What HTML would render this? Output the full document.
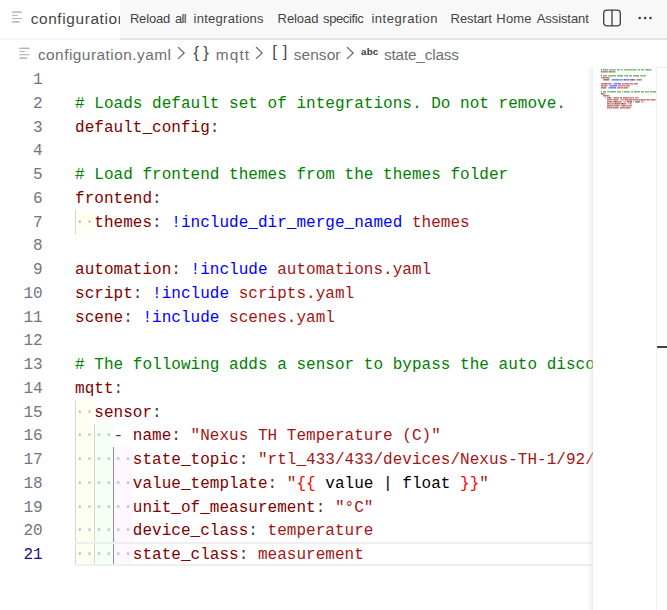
<!DOCTYPE html>
<html lang="en">
<head>
<meta charset="utf-8">
<title>configuration.yaml</title>
<style>
html,body{margin:0;padding:0;}
body{width:667px;height:610px;overflow:hidden;background:#fff;position:relative;font-family:"Liberation Sans",sans-serif;color:#3b3b3b;}
.abs{position:absolute;}
#tabbar{left:0;top:0;width:667px;height:37.9px;background:#f8f8f8;border-bottom:2px solid #e3e3e3;box-sizing:content-box;}
#tab{left:0;top:0;width:120px;height:37.9px;background:#fff;overflow:hidden;border-bottom:2px solid #f6f6f6;}
#tab .lbl{left:30.7px;top:9.4px;font-size:15.4px;line-height:20px;white-space:nowrap;color:#464646;letter-spacing:0.618px;}
.actw{left:0;top:0;}
.act{top:9.7px;font-size:13px;line-height:18px;white-space:nowrap;color:#444444;}
#crumbs{left:0;top:39.7px;width:667px;height:27.5px;background:#fff;}
.cr{top:5.6px;font-size:15.4px;line-height:20px;white-space:pre;color:#707070;}
.sym{font-size:16.6px;top:3.1px;letter-spacing:-0.2px;color:#4a4a4a;}
.abc{font-size:9.8px;font-weight:bold;top:2.8px;letter-spacing:0.2px;color:#3b3b3b;}
#editor{left:0;top:67.25px;width:593px;height:543px;overflow:hidden;font-family:"Liberation Mono",monospace;font-size:16px;}
.ln{left:0;width:42.6px;margin-top:1.85px;text-align:right;height:23.75px;line-height:23.75px;color:#6e7681;white-space:pre;}
.ln.cur{color:#171184;}
.l{left:75px;margin-top:1.85px;letter-spacing:0.024px;height:23.75px;line-height:23.75px;white-space:pre;color:#3b3b3b;}
.c{color:#008000}.k{color:#800000}.s{color:#a31515}.t{color:#0000ff}.b{color:#ff0000}.p{color:#000}
.w{color:#b4b4b4;font-size:19px;line-height:1px;letter-spacing:-1.776px;position:relative;left:-0.9px;opacity:0.72}
.g{width:1px;background:#d6d6d6;}
.ga{width:1px;background:#8c8c8c;}
.iy{background:rgba(255,255,64,0.07);}
.ig{background:rgba(127,255,127,0.07);}
.ip{background:rgba(255,127,255,0.07);}
#curline{left:75px;width:520px;height:24px;margin-top:-0.25px;box-sizing:border-box;border-top:2px solid #eeeeee;border-bottom:2px solid #eeeeee;}
#mmshadow{left:584.5px;top:67.25px;width:8.5px;height:543px;box-shadow:#dcdcdc -8.5px 0 8.5px -8.5px inset;}
#minimap{left:593px;top:67px;width:64px;height:543px;background:#fff;overflow:hidden;}
#ruler{left:656px;top:67.25px;width:11px;height:543px;border-left:1px solid #f1f1f1;border-top:1px solid #f1f1f1;box-sizing:border-box;background:#fff;}
#rmark{left:0;top:277.75px;width:11px;height:2px;background:#424242;}
</style>
</head>
<body>
<div id="tabbar" class="abs"></div>
<div id="tab" class="abs">
  <svg class="abs" style="left:11px;top:10px" width="14" height="14" viewBox="0 0 14 14"><g fill="#b4b4b4"><rect x="0.9" y="1.4" width="10.1" height="1.5"/><rect x="0.9" y="4.8" width="5.9" height="1"/><rect x="0.9" y="8" width="10.1" height="1"/><rect x="0.9" y="11.2" width="7.8" height="1.5"/></g></svg>
  <div class="abs lbl">configuration</div>
</div>
<div class="abs actw"><span class="abs act" style="left:129.9px;letter-spacing:-0.16px">Reload</span> <span class="abs act" style="left:174.9px;letter-spacing:-0.6px">all</span> <span class="abs act" style="left:193.6px;letter-spacing:0.255px">integrations</span></div>
<div class="abs actw"><span class="abs act" style="left:277.6px;letter-spacing:-0.08px">Reload</span> <span class="abs act" style="left:323.0px;letter-spacing:-0.371px">specific</span> <span class="abs act" style="left:371.4px;letter-spacing:0.54px">integration</span></div>
<div class="abs actw"><span class="abs act" style="left:450.6px;letter-spacing:-0.1px">Restart</span> <span class="abs act" style="left:496.3px;letter-spacing:0.2px">Home</span> <span class="abs act" style="left:536.7px;letter-spacing:-0.075px">Assistant</span></div>
<svg class="abs" style="left:602.4px;top:6.8px" width="22" height="22" viewBox="0 0 22 22"><rect x="1.7" y="3.1" width="16.6" height="15.8" rx="3.2" fill="none" stroke="#3b3b3b" stroke-width="1.3"/><line x1="10" y1="3.1" x2="10" y2="18.9" stroke="#3b3b3b" stroke-width="1.3"/></svg>
<svg class="abs" style="left:636px;top:14px" width="18" height="8" viewBox="0 0 18 8"><g fill="#3b3b3b"><circle cx="3.7" cy="4" r="1.25"/><circle cx="9.1" cy="4" r="1.25"/><circle cx="14.5" cy="4" r="1.25"/></g></svg>

<div id="crumbs" class="abs">
  <svg class="abs" style="left:18px;top:6px" width="14" height="14" viewBox="0 0 14 14"><g fill="#b4b4b4"><rect x="1.3" y="1.6" width="10.3" height="1.5"/><rect x="1.3" y="5" width="5.9" height="1"/><rect x="1.3" y="8.2" width="10.3" height="1.1"/><rect x="1.3" y="11.4" width="7.8" height="1.5"/></g></svg>
  <div class="abs cr" style="left:37.9px;letter-spacing:0.482px">configuration.yaml</div>
  <svg class="abs chev" style="left:175.7px;top:7.6px" width="11" height="14" viewBox="0 0 11 14"><path d="M2.0 0.1 L8.2 6.0 L2.0 11.9" fill="none" stroke="#646464" stroke-width="1.2"/></svg>
  <div class="abs cr sym" style="left:193.6px">{ }</div>
  <div class="abs cr" style="left:215.8px;letter-spacing:1.133px">mqtt</div>
  <svg class="abs chev" style="left:253.7px;top:7.6px" width="11" height="14" viewBox="0 0 11 14"><path d="M2.0 0.1 L8.2 6.0 L2.0 11.9" fill="none" stroke="#646464" stroke-width="1.2"/></svg>
  <div class="abs cr sym" style="left:272.3px;word-spacing:1.6px;margin-top:-0.7px">[ ]</div>
  <div class="abs cr" style="left:293.8px;letter-spacing:0.08px">sensor</div>
  <svg class="abs chev" style="left:344.7px;top:7.6px" width="11" height="14" viewBox="0 0 11 14"><path d="M2.0 0.1 L8.2 6.0 L2.0 11.9" fill="none" stroke="#646464" stroke-width="1.2"/></svg>
  <div class="abs cr abc" style="left:361px">abc</div>
  <div class="abs cr" style="left:384px;letter-spacing:-0.2px">state_class</div>
</div>

<div id="editor" class="abs">
<div class="abs iy" style="left:75px;top:142.5px;width:19px;height:23.75px"></div>
<div class="abs iy" style="left:75px;top:332.5px;width:19px;height:166.25px"></div>
<div class="abs ig" style="left:94px;top:356.25px;width:19px;height:142.5px"></div>
<div class="abs ip" style="left:113px;top:380px;width:20px;height:118.75px"></div>
<div class="abs g" style="left:75px;top:142.5px;height:23.75px"></div>
<div class="abs g" style="left:75px;top:332.5px;height:166.25px"></div>
<div class="abs g" style="left:94px;top:356.25px;height:142.5px"></div>
<div class="abs ga" style="left:113px;top:380px;height:118.75px"></div>
<div id="curline" class="abs" style="top:475px"></div>
<div class="abs ln" style="top:0px">1</div>
<div class="abs ln" style="top:23.75px">2</div>
<div class="abs ln" style="top:47.5px">3</div>
<div class="abs ln" style="top:71.25px">4</div>
<div class="abs ln" style="top:95px">5</div>
<div class="abs ln" style="top:118.75px">6</div>
<div class="abs ln" style="top:142.5px">7</div>
<div class="abs ln" style="top:166.25px">8</div>
<div class="abs ln" style="top:190px">9</div>
<div class="abs ln" style="top:213.75px">10</div>
<div class="abs ln" style="top:237.5px">11</div>
<div class="abs ln" style="top:261.25px">12</div>
<div class="abs ln" style="top:285px">13</div>
<div class="abs ln" style="top:308.75px">14</div>
<div class="abs ln" style="top:332.5px">15</div>
<div class="abs ln" style="top:356.25px">16</div>
<div class="abs ln" style="top:380px">17</div>
<div class="abs ln" style="top:403.75px">18</div>
<div class="abs ln" style="top:427.5px">19</div>
<div class="abs ln" style="top:451.25px">20</div>
<div class="abs ln cur" style="top:475px">21</div>
<div class="abs l" style="top:23.75px"><span class="c"># Loads default set of integrations. Do not remove.</span></div>
<div class="abs l" style="top:47.5px"><span class="k">default_config</span>:</div>
<div class="abs l" style="top:95px"><span class="c"># Load frontend themes from the themes folder</span></div>
<div class="abs l" style="top:118.75px"><span class="k">frontend</span>:</div>
<div class="abs l" style="top:142.5px"><span class="w">··</span><span class="k">themes</span>: <span class="t">!include_dir_merge_named</span> <span class="s">themes</span></div>
<div class="abs l" style="top:190px"><span class="k">automation</span>: <span class="t">!include</span> <span class="s">automations.yaml</span></div>
<div class="abs l" style="top:213.75px"><span class="k">script</span>: <span class="t">!include</span> <span class="s">scripts.yaml</span></div>
<div class="abs l" style="top:237.5px"><span class="k">scene</span>: <span class="t">!include</span> <span class="s">scenes.yaml</span></div>
<div class="abs l" style="top:285px"><span class="c"># The following adds a sensor to bypass the auto disco</span></div>
<div class="abs l" style="top:308.75px"><span class="k">mqtt</span>:</div>
<div class="abs l" style="top:332.5px"><span class="w">··</span><span class="k">sensor</span>:</div>
<div class="abs l" style="top:356.25px"><span class="w">····</span>- <span class="k">name</span>: <span class="s">"Nexus TH Temperature (C)"</span></div>
<div class="abs l" style="top:380px"><span class="w">······</span><span class="k">state_topic</span>: <span class="s">"rtl_433/433/devices/Nexus-TH-1/92/</span></div>
<div class="abs l" style="top:403.75px"><span class="w">······</span><span class="k">value_template</span>: <span class="s">"</span><span class="b">{{</span><span class="p"> value | float </span><span class="b">}}</span><span class="s">"</span></div>
<div class="abs l" style="top:427.5px"><span class="w">······</span><span class="k">unit_of_measurement</span>: <span class="s">"°C"</span></div>
<div class="abs l" style="top:451.25px"><span class="w">······</span><span class="k">device_class</span>: <span class="s">temperature</span></div>
<div class="abs l" style="top:475px"><span class="w">······</span><span class="k">state_class</span>: <span class="s">measurement</span></div>
</div>
<div id="mmshadow" class="abs"></div>
<div id="minimap" class="abs">
<svg class="abs" style="left:0;top:0" width="64" height="48" viewBox="0 0 64 48" shape-rendering="crispEdges"><g fill="#008000"><rect x="8" y="2" width="1" height="1" opacity="0.66"/><rect x="8" y="3" width="1" height="1" opacity="0.39"/><rect x="10" y="2" width="1" height="1" opacity="0.59"/><rect x="10" y="3" width="1" height="1" opacity="0.35"/><rect x="11" y="2" width="1" height="1" opacity="0.51"/><rect x="11" y="3" width="1" height="1" opacity="0.30"/><rect x="12" y="2" width="1" height="1" opacity="0.51"/><rect x="12" y="3" width="1" height="1" opacity="0.30"/><rect x="13" y="2" width="1" height="1" opacity="0.51"/><rect x="13" y="3" width="1" height="1" opacity="0.30"/><rect x="14" y="2" width="1" height="1" opacity="0.51"/><rect x="14" y="3" width="1" height="1" opacity="0.30"/><rect x="16" y="2" width="1" height="1" opacity="0.51"/><rect x="16" y="3" width="1" height="1" opacity="0.30"/><rect x="17" y="2" width="1" height="1" opacity="0.51"/><rect x="17" y="3" width="1" height="1" opacity="0.30"/><rect x="18" y="2" width="1" height="1" opacity="0.41"/><rect x="18" y="3" width="1" height="1" opacity="0.24"/><rect x="19" y="2" width="1" height="1" opacity="0.51"/><rect x="19" y="3" width="1" height="1" opacity="0.30"/><rect x="20" y="2" width="1" height="1" opacity="0.51"/><rect x="20" y="3" width="1" height="1" opacity="0.30"/><rect x="21" y="2" width="1" height="1" opacity="0.41"/><rect x="21" y="3" width="1" height="1" opacity="0.24"/><rect x="22" y="2" width="1" height="1" opacity="0.41"/><rect x="22" y="3" width="1" height="1" opacity="0.24"/><rect x="24" y="2" width="1" height="1" opacity="0.51"/><rect x="24" y="3" width="1" height="1" opacity="0.30"/><rect x="25" y="2" width="1" height="1" opacity="0.51"/><rect x="25" y="3" width="1" height="1" opacity="0.30"/><rect x="26" y="2" width="1" height="1" opacity="0.41"/><rect x="26" y="3" width="1" height="1" opacity="0.24"/><rect x="28" y="2" width="1" height="1" opacity="0.51"/><rect x="28" y="3" width="1" height="1" opacity="0.30"/><rect x="29" y="2" width="1" height="1" opacity="0.41"/><rect x="29" y="3" width="1" height="1" opacity="0.24"/><rect x="31" y="2" width="1" height="1" opacity="0.41"/><rect x="31" y="3" width="1" height="1" opacity="0.24"/><rect x="32" y="2" width="1" height="1" opacity="0.51"/><rect x="32" y="3" width="1" height="1" opacity="0.30"/><rect x="33" y="2" width="1" height="1" opacity="0.41"/><rect x="33" y="3" width="1" height="1" opacity="0.24"/><rect x="34" y="2" width="1" height="1" opacity="0.51"/><rect x="34" y="3" width="1" height="1" opacity="0.30"/><rect x="35" y="2" width="1" height="1" opacity="0.51"/><rect x="35" y="3" width="1" height="1" opacity="0.30"/><rect x="36" y="2" width="1" height="1" opacity="0.41"/><rect x="36" y="3" width="1" height="1" opacity="0.24"/><rect x="37" y="2" width="1" height="1" opacity="0.51"/><rect x="37" y="3" width="1" height="1" opacity="0.30"/><rect x="38" y="2" width="1" height="1" opacity="0.41"/><rect x="38" y="3" width="1" height="1" opacity="0.24"/><rect x="39" y="2" width="1" height="1" opacity="0.41"/><rect x="39" y="3" width="1" height="1" opacity="0.24"/><rect x="40" y="2" width="1" height="1" opacity="0.51"/><rect x="40" y="3" width="1" height="1" opacity="0.30"/><rect x="41" y="2" width="1" height="1" opacity="0.51"/><rect x="41" y="3" width="1" height="1" opacity="0.30"/><rect x="42" y="2" width="1" height="1" opacity="0.51"/><rect x="42" y="3" width="1" height="1" opacity="0.30"/><rect x="43" y="2" width="1" height="1" opacity="0.26"/><rect x="43" y="3" width="1" height="1" opacity="0.15"/><rect x="45" y="2" width="1" height="1" opacity="0.59"/><rect x="45" y="3" width="1" height="1" opacity="0.35"/><rect x="46" y="2" width="1" height="1" opacity="0.51"/><rect x="46" y="3" width="1" height="1" opacity="0.30"/><rect x="48" y="2" width="1" height="1" opacity="0.51"/><rect x="48" y="3" width="1" height="1" opacity="0.30"/><rect x="49" y="2" width="1" height="1" opacity="0.51"/><rect x="49" y="3" width="1" height="1" opacity="0.30"/><rect x="50" y="2" width="1" height="1" opacity="0.41"/><rect x="50" y="3" width="1" height="1" opacity="0.24"/><rect x="52" y="2" width="1" height="1" opacity="0.41"/><rect x="52" y="3" width="1" height="1" opacity="0.24"/><rect x="53" y="2" width="1" height="1" opacity="0.51"/><rect x="53" y="3" width="1" height="1" opacity="0.30"/><rect x="54" y="2" width="1" height="1" opacity="0.66"/><rect x="54" y="3" width="1" height="1" opacity="0.39"/><rect x="55" y="2" width="1" height="1" opacity="0.51"/><rect x="55" y="3" width="1" height="1" opacity="0.30"/><rect x="56" y="2" width="1" height="1" opacity="0.51"/><rect x="56" y="3" width="1" height="1" opacity="0.30"/><rect x="57" y="2" width="1" height="1" opacity="0.51"/><rect x="57" y="3" width="1" height="1" opacity="0.30"/><rect x="58" y="2" width="1" height="1" opacity="0.26"/><rect x="58" y="3" width="1" height="1" opacity="0.15"/></g>
<g fill="#800000"><rect x="8" y="4" width="1" height="1" opacity="0.51"/><rect x="8" y="5" width="1" height="1" opacity="0.30"/><rect x="9" y="4" width="1" height="1" opacity="0.51"/><rect x="9" y="5" width="1" height="1" opacity="0.30"/><rect x="10" y="4" width="1" height="1" opacity="0.41"/><rect x="10" y="5" width="1" height="1" opacity="0.24"/><rect x="11" y="4" width="1" height="1" opacity="0.51"/><rect x="11" y="5" width="1" height="1" opacity="0.30"/><rect x="12" y="4" width="1" height="1" opacity="0.51"/><rect x="12" y="5" width="1" height="1" opacity="0.30"/><rect x="13" y="4" width="1" height="1" opacity="0.41"/><rect x="13" y="5" width="1" height="1" opacity="0.24"/><rect x="14" y="4" width="1" height="1" opacity="0.41"/><rect x="14" y="5" width="1" height="1" opacity="0.24"/><rect x="15" y="4" width="1" height="1" opacity="0.26"/><rect x="15" y="5" width="1" height="1" opacity="0.15"/><rect x="16" y="4" width="1" height="1" opacity="0.51"/><rect x="16" y="5" width="1" height="1" opacity="0.30"/><rect x="17" y="4" width="1" height="1" opacity="0.51"/><rect x="17" y="5" width="1" height="1" opacity="0.30"/><rect x="18" y="4" width="1" height="1" opacity="0.51"/><rect x="18" y="5" width="1" height="1" opacity="0.30"/><rect x="19" y="4" width="1" height="1" opacity="0.41"/><rect x="19" y="5" width="1" height="1" opacity="0.24"/><rect x="20" y="4" width="1" height="1" opacity="0.41"/><rect x="20" y="5" width="1" height="1" opacity="0.24"/><rect x="21" y="4" width="1" height="1" opacity="0.51"/><rect x="21" y="5" width="1" height="1" opacity="0.30"/></g><g fill="#3b3b3b"><rect x="22" y="4" width="1" height="1" opacity="0.26"/><rect x="22" y="5" width="1" height="1" opacity="0.15"/></g>
<g fill="#008000"><rect x="8" y="8" width="1" height="1" opacity="0.66"/><rect x="8" y="9" width="1" height="1" opacity="0.39"/><rect x="10" y="8" width="1" height="1" opacity="0.59"/><rect x="10" y="9" width="1" height="1" opacity="0.35"/><rect x="11" y="8" width="1" height="1" opacity="0.51"/><rect x="11" y="9" width="1" height="1" opacity="0.30"/><rect x="12" y="8" width="1" height="1" opacity="0.51"/><rect x="12" y="9" width="1" height="1" opacity="0.30"/><rect x="13" y="8" width="1" height="1" opacity="0.51"/><rect x="13" y="9" width="1" height="1" opacity="0.30"/><rect x="15" y="8" width="1" height="1" opacity="0.41"/><rect x="15" y="9" width="1" height="1" opacity="0.24"/><rect x="16" y="8" width="1" height="1" opacity="0.41"/><rect x="16" y="9" width="1" height="1" opacity="0.24"/><rect x="17" y="8" width="1" height="1" opacity="0.51"/><rect x="17" y="9" width="1" height="1" opacity="0.30"/><rect x="18" y="8" width="1" height="1" opacity="0.51"/><rect x="18" y="9" width="1" height="1" opacity="0.30"/><rect x="19" y="8" width="1" height="1" opacity="0.41"/><rect x="19" y="9" width="1" height="1" opacity="0.24"/><rect x="20" y="8" width="1" height="1" opacity="0.51"/><rect x="20" y="9" width="1" height="1" opacity="0.30"/><rect x="21" y="8" width="1" height="1" opacity="0.51"/><rect x="21" y="9" width="1" height="1" opacity="0.30"/><rect x="22" y="8" width="1" height="1" opacity="0.51"/><rect x="22" y="9" width="1" height="1" opacity="0.30"/><rect x="24" y="8" width="1" height="1" opacity="0.41"/><rect x="24" y="9" width="1" height="1" opacity="0.24"/><rect x="25" y="8" width="1" height="1" opacity="0.51"/><rect x="25" y="9" width="1" height="1" opacity="0.30"/><rect x="26" y="8" width="1" height="1" opacity="0.51"/><rect x="26" y="9" width="1" height="1" opacity="0.30"/><rect x="27" y="8" width="1" height="1" opacity="0.66"/><rect x="27" y="9" width="1" height="1" opacity="0.39"/><rect x="28" y="8" width="1" height="1" opacity="0.51"/><rect x="28" y="9" width="1" height="1" opacity="0.30"/><rect x="29" y="8" width="1" height="1" opacity="0.51"/><rect x="29" y="9" width="1" height="1" opacity="0.30"/><rect x="31" y="8" width="1" height="1" opacity="0.41"/><rect x="31" y="9" width="1" height="1" opacity="0.24"/><rect x="32" y="8" width="1" height="1" opacity="0.41"/><rect x="32" y="9" width="1" height="1" opacity="0.24"/><rect x="33" y="8" width="1" height="1" opacity="0.51"/><rect x="33" y="9" width="1" height="1" opacity="0.30"/><rect x="34" y="8" width="1" height="1" opacity="0.66"/><rect x="34" y="9" width="1" height="1" opacity="0.39"/><rect x="36" y="8" width="1" height="1" opacity="0.41"/><rect x="36" y="9" width="1" height="1" opacity="0.24"/><rect x="37" y="8" width="1" height="1" opacity="0.51"/><rect x="37" y="9" width="1" height="1" opacity="0.30"/><rect x="38" y="8" width="1" height="1" opacity="0.51"/><rect x="38" y="9" width="1" height="1" opacity="0.30"/><rect x="40" y="8" width="1" height="1" opacity="0.41"/><rect x="40" y="9" width="1" height="1" opacity="0.24"/><rect x="41" y="8" width="1" height="1" opacity="0.51"/><rect x="41" y="9" width="1" height="1" opacity="0.30"/><rect x="42" y="8" width="1" height="1" opacity="0.51"/><rect x="42" y="9" width="1" height="1" opacity="0.30"/><rect x="43" y="8" width="1" height="1" opacity="0.66"/><rect x="43" y="9" width="1" height="1" opacity="0.39"/><rect x="44" y="8" width="1" height="1" opacity="0.51"/><rect x="44" y="9" width="1" height="1" opacity="0.30"/><rect x="45" y="8" width="1" height="1" opacity="0.51"/><rect x="45" y="9" width="1" height="1" opacity="0.30"/><rect x="47" y="8" width="1" height="1" opacity="0.41"/><rect x="47" y="9" width="1" height="1" opacity="0.24"/><rect x="48" y="8" width="1" height="1" opacity="0.51"/><rect x="48" y="9" width="1" height="1" opacity="0.30"/><rect x="49" y="8" width="1" height="1" opacity="0.41"/><rect x="49" y="9" width="1" height="1" opacity="0.24"/><rect x="50" y="8" width="1" height="1" opacity="0.51"/><rect x="50" y="9" width="1" height="1" opacity="0.30"/><rect x="51" y="8" width="1" height="1" opacity="0.51"/><rect x="51" y="9" width="1" height="1" opacity="0.30"/><rect x="52" y="8" width="1" height="1" opacity="0.41"/><rect x="52" y="9" width="1" height="1" opacity="0.24"/></g>
<g fill="#800000"><rect x="8" y="10" width="1" height="1" opacity="0.41"/><rect x="8" y="11" width="1" height="1" opacity="0.24"/><rect x="9" y="10" width="1" height="1" opacity="0.41"/><rect x="9" y="11" width="1" height="1" opacity="0.24"/><rect x="10" y="10" width="1" height="1" opacity="0.51"/><rect x="10" y="11" width="1" height="1" opacity="0.30"/><rect x="11" y="10" width="1" height="1" opacity="0.51"/><rect x="11" y="11" width="1" height="1" opacity="0.30"/><rect x="12" y="10" width="1" height="1" opacity="0.41"/><rect x="12" y="11" width="1" height="1" opacity="0.24"/><rect x="13" y="10" width="1" height="1" opacity="0.51"/><rect x="13" y="11" width="1" height="1" opacity="0.30"/><rect x="14" y="10" width="1" height="1" opacity="0.51"/><rect x="14" y="11" width="1" height="1" opacity="0.30"/><rect x="15" y="10" width="1" height="1" opacity="0.51"/><rect x="15" y="11" width="1" height="1" opacity="0.30"/></g><g fill="#3b3b3b"><rect x="16" y="10" width="1" height="1" opacity="0.26"/><rect x="16" y="11" width="1" height="1" opacity="0.15"/></g>
<g fill="#800000"><rect x="10" y="12" width="1" height="1" opacity="0.41"/><rect x="10" y="13" width="1" height="1" opacity="0.24"/><rect x="11" y="12" width="1" height="1" opacity="0.51"/><rect x="11" y="13" width="1" height="1" opacity="0.30"/><rect x="12" y="12" width="1" height="1" opacity="0.51"/><rect x="12" y="13" width="1" height="1" opacity="0.30"/><rect x="13" y="12" width="1" height="1" opacity="0.66"/><rect x="13" y="13" width="1" height="1" opacity="0.39"/><rect x="14" y="12" width="1" height="1" opacity="0.51"/><rect x="14" y="13" width="1" height="1" opacity="0.30"/><rect x="15" y="12" width="1" height="1" opacity="0.51"/><rect x="15" y="13" width="1" height="1" opacity="0.30"/></g><g fill="#3b3b3b"><rect x="16" y="12" width="1" height="1" opacity="0.26"/><rect x="16" y="13" width="1" height="1" opacity="0.15"/></g><g fill="#0000ff"><rect x="18" y="12" width="1" height="1" opacity="0.26"/><rect x="18" y="13" width="1" height="1" opacity="0.15"/><rect x="19" y="12" width="1" height="1" opacity="0.41"/><rect x="19" y="13" width="1" height="1" opacity="0.24"/><rect x="20" y="12" width="1" height="1" opacity="0.51"/><rect x="20" y="13" width="1" height="1" opacity="0.30"/><rect x="21" y="12" width="1" height="1" opacity="0.51"/><rect x="21" y="13" width="1" height="1" opacity="0.30"/><rect x="22" y="12" width="1" height="1" opacity="0.41"/><rect x="22" y="13" width="1" height="1" opacity="0.24"/><rect x="23" y="12" width="1" height="1" opacity="0.51"/><rect x="23" y="13" width="1" height="1" opacity="0.30"/><rect x="24" y="12" width="1" height="1" opacity="0.51"/><rect x="24" y="13" width="1" height="1" opacity="0.30"/><rect x="25" y="12" width="1" height="1" opacity="0.51"/><rect x="25" y="13" width="1" height="1" opacity="0.30"/><rect x="26" y="12" width="1" height="1" opacity="0.26"/><rect x="26" y="13" width="1" height="1" opacity="0.15"/><rect x="27" y="12" width="1" height="1" opacity="0.51"/><rect x="27" y="13" width="1" height="1" opacity="0.30"/><rect x="28" y="12" width="1" height="1" opacity="0.41"/><rect x="28" y="13" width="1" height="1" opacity="0.24"/><rect x="29" y="12" width="1" height="1" opacity="0.41"/><rect x="29" y="13" width="1" height="1" opacity="0.24"/><rect x="30" y="12" width="1" height="1" opacity="0.26"/><rect x="30" y="13" width="1" height="1" opacity="0.15"/><rect x="31" y="12" width="1" height="1" opacity="0.66"/><rect x="31" y="13" width="1" height="1" opacity="0.39"/><rect x="32" y="12" width="1" height="1" opacity="0.51"/><rect x="32" y="13" width="1" height="1" opacity="0.30"/><rect x="33" y="12" width="1" height="1" opacity="0.41"/><rect x="33" y="13" width="1" height="1" opacity="0.24"/><rect x="34" y="12" width="1" height="1" opacity="0.51"/><rect x="34" y="13" width="1" height="1" opacity="0.30"/><rect x="35" y="12" width="1" height="1" opacity="0.51"/><rect x="35" y="13" width="1" height="1" opacity="0.30"/><rect x="36" y="12" width="1" height="1" opacity="0.26"/><rect x="36" y="13" width="1" height="1" opacity="0.15"/><rect x="37" y="12" width="1" height="1" opacity="0.51"/><rect x="37" y="13" width="1" height="1" opacity="0.30"/><rect x="38" y="12" width="1" height="1" opacity="0.51"/><rect x="38" y="13" width="1" height="1" opacity="0.30"/><rect x="39" y="12" width="1" height="1" opacity="0.66"/><rect x="39" y="13" width="1" height="1" opacity="0.39"/><rect x="40" y="12" width="1" height="1" opacity="0.51"/><rect x="40" y="13" width="1" height="1" opacity="0.30"/><rect x="41" y="12" width="1" height="1" opacity="0.51"/><rect x="41" y="13" width="1" height="1" opacity="0.30"/></g><g fill="#a31515"><rect x="43" y="12" width="1" height="1" opacity="0.41"/><rect x="43" y="13" width="1" height="1" opacity="0.24"/><rect x="44" y="12" width="1" height="1" opacity="0.51"/><rect x="44" y="13" width="1" height="1" opacity="0.30"/><rect x="45" y="12" width="1" height="1" opacity="0.51"/><rect x="45" y="13" width="1" height="1" opacity="0.30"/><rect x="46" y="12" width="1" height="1" opacity="0.66"/><rect x="46" y="13" width="1" height="1" opacity="0.39"/><rect x="47" y="12" width="1" height="1" opacity="0.51"/><rect x="47" y="13" width="1" height="1" opacity="0.30"/><rect x="48" y="12" width="1" height="1" opacity="0.51"/><rect x="48" y="13" width="1" height="1" opacity="0.30"/></g>
<g fill="#800000"><rect x="8" y="16" width="1" height="1" opacity="0.51"/><rect x="8" y="17" width="1" height="1" opacity="0.30"/><rect x="9" y="16" width="1" height="1" opacity="0.51"/><rect x="9" y="17" width="1" height="1" opacity="0.30"/><rect x="10" y="16" width="1" height="1" opacity="0.41"/><rect x="10" y="17" width="1" height="1" opacity="0.24"/><rect x="11" y="16" width="1" height="1" opacity="0.51"/><rect x="11" y="17" width="1" height="1" opacity="0.30"/><rect x="12" y="16" width="1" height="1" opacity="0.66"/><rect x="12" y="17" width="1" height="1" opacity="0.39"/><rect x="13" y="16" width="1" height="1" opacity="0.51"/><rect x="13" y="17" width="1" height="1" opacity="0.30"/><rect x="14" y="16" width="1" height="1" opacity="0.41"/><rect x="14" y="17" width="1" height="1" opacity="0.24"/><rect x="15" y="16" width="1" height="1" opacity="0.41"/><rect x="15" y="17" width="1" height="1" opacity="0.24"/><rect x="16" y="16" width="1" height="1" opacity="0.51"/><rect x="16" y="17" width="1" height="1" opacity="0.30"/><rect x="17" y="16" width="1" height="1" opacity="0.51"/><rect x="17" y="17" width="1" height="1" opacity="0.30"/></g><g fill="#3b3b3b"><rect x="18" y="16" width="1" height="1" opacity="0.26"/><rect x="18" y="17" width="1" height="1" opacity="0.15"/></g><g fill="#0000ff"><rect x="20" y="16" width="1" height="1" opacity="0.26"/><rect x="20" y="17" width="1" height="1" opacity="0.15"/><rect x="21" y="16" width="1" height="1" opacity="0.41"/><rect x="21" y="17" width="1" height="1" opacity="0.24"/><rect x="22" y="16" width="1" height="1" opacity="0.51"/><rect x="22" y="17" width="1" height="1" opacity="0.30"/><rect x="23" y="16" width="1" height="1" opacity="0.51"/><rect x="23" y="17" width="1" height="1" opacity="0.30"/><rect x="24" y="16" width="1" height="1" opacity="0.41"/><rect x="24" y="17" width="1" height="1" opacity="0.24"/><rect x="25" y="16" width="1" height="1" opacity="0.51"/><rect x="25" y="17" width="1" height="1" opacity="0.30"/><rect x="26" y="16" width="1" height="1" opacity="0.51"/><rect x="26" y="17" width="1" height="1" opacity="0.30"/><rect x="27" y="16" width="1" height="1" opacity="0.51"/><rect x="27" y="17" width="1" height="1" opacity="0.30"/></g><g fill="#a31515"><rect x="29" y="16" width="1" height="1" opacity="0.51"/><rect x="29" y="17" width="1" height="1" opacity="0.30"/><rect x="30" y="16" width="1" height="1" opacity="0.51"/><rect x="30" y="17" width="1" height="1" opacity="0.30"/><rect x="31" y="16" width="1" height="1" opacity="0.41"/><rect x="31" y="17" width="1" height="1" opacity="0.24"/><rect x="32" y="16" width="1" height="1" opacity="0.51"/><rect x="32" y="17" width="1" height="1" opacity="0.30"/><rect x="33" y="16" width="1" height="1" opacity="0.66"/><rect x="33" y="17" width="1" height="1" opacity="0.39"/><rect x="34" y="16" width="1" height="1" opacity="0.51"/><rect x="34" y="17" width="1" height="1" opacity="0.30"/><rect x="35" y="16" width="1" height="1" opacity="0.41"/><rect x="35" y="17" width="1" height="1" opacity="0.24"/><rect x="36" y="16" width="1" height="1" opacity="0.41"/><rect x="36" y="17" width="1" height="1" opacity="0.24"/><rect x="37" y="16" width="1" height="1" opacity="0.51"/><rect x="37" y="17" width="1" height="1" opacity="0.30"/><rect x="38" y="16" width="1" height="1" opacity="0.51"/><rect x="38" y="17" width="1" height="1" opacity="0.30"/><rect x="39" y="16" width="1" height="1" opacity="0.51"/><rect x="39" y="17" width="1" height="1" opacity="0.30"/><rect x="40" y="16" width="1" height="1" opacity="0.26"/><rect x="40" y="17" width="1" height="1" opacity="0.15"/><rect x="41" y="16" width="1" height="1" opacity="0.51"/><rect x="41" y="17" width="1" height="1" opacity="0.30"/><rect x="42" y="16" width="1" height="1" opacity="0.51"/><rect x="42" y="17" width="1" height="1" opacity="0.30"/><rect x="43" y="16" width="1" height="1" opacity="0.66"/><rect x="43" y="17" width="1" height="1" opacity="0.39"/><rect x="44" y="16" width="1" height="1" opacity="0.41"/><rect x="44" y="17" width="1" height="1" opacity="0.24"/></g>
<g fill="#800000"><rect x="8" y="18" width="1" height="1" opacity="0.51"/><rect x="8" y="19" width="1" height="1" opacity="0.30"/><rect x="9" y="18" width="1" height="1" opacity="0.51"/><rect x="9" y="19" width="1" height="1" opacity="0.30"/><rect x="10" y="18" width="1" height="1" opacity="0.41"/><rect x="10" y="19" width="1" height="1" opacity="0.24"/><rect x="11" y="18" width="1" height="1" opacity="0.41"/><rect x="11" y="19" width="1" height="1" opacity="0.24"/><rect x="12" y="18" width="1" height="1" opacity="0.51"/><rect x="12" y="19" width="1" height="1" opacity="0.30"/><rect x="13" y="18" width="1" height="1" opacity="0.41"/><rect x="13" y="19" width="1" height="1" opacity="0.24"/></g><g fill="#3b3b3b"><rect x="14" y="18" width="1" height="1" opacity="0.26"/><rect x="14" y="19" width="1" height="1" opacity="0.15"/></g><g fill="#0000ff"><rect x="16" y="18" width="1" height="1" opacity="0.26"/><rect x="16" y="19" width="1" height="1" opacity="0.15"/><rect x="17" y="18" width="1" height="1" opacity="0.41"/><rect x="17" y="19" width="1" height="1" opacity="0.24"/><rect x="18" y="18" width="1" height="1" opacity="0.51"/><rect x="18" y="19" width="1" height="1" opacity="0.30"/><rect x="19" y="18" width="1" height="1" opacity="0.51"/><rect x="19" y="19" width="1" height="1" opacity="0.30"/><rect x="20" y="18" width="1" height="1" opacity="0.41"/><rect x="20" y="19" width="1" height="1" opacity="0.24"/><rect x="21" y="18" width="1" height="1" opacity="0.51"/><rect x="21" y="19" width="1" height="1" opacity="0.30"/><rect x="22" y="18" width="1" height="1" opacity="0.51"/><rect x="22" y="19" width="1" height="1" opacity="0.30"/><rect x="23" y="18" width="1" height="1" opacity="0.51"/><rect x="23" y="19" width="1" height="1" opacity="0.30"/></g><g fill="#a31515"><rect x="25" y="18" width="1" height="1" opacity="0.51"/><rect x="25" y="19" width="1" height="1" opacity="0.30"/><rect x="26" y="18" width="1" height="1" opacity="0.51"/><rect x="26" y="19" width="1" height="1" opacity="0.30"/><rect x="27" y="18" width="1" height="1" opacity="0.41"/><rect x="27" y="19" width="1" height="1" opacity="0.24"/><rect x="28" y="18" width="1" height="1" opacity="0.41"/><rect x="28" y="19" width="1" height="1" opacity="0.24"/><rect x="29" y="18" width="1" height="1" opacity="0.51"/><rect x="29" y="19" width="1" height="1" opacity="0.30"/><rect x="30" y="18" width="1" height="1" opacity="0.41"/><rect x="30" y="19" width="1" height="1" opacity="0.24"/><rect x="31" y="18" width="1" height="1" opacity="0.51"/><rect x="31" y="19" width="1" height="1" opacity="0.30"/><rect x="32" y="18" width="1" height="1" opacity="0.26"/><rect x="32" y="19" width="1" height="1" opacity="0.15"/><rect x="33" y="18" width="1" height="1" opacity="0.51"/><rect x="33" y="19" width="1" height="1" opacity="0.30"/><rect x="34" y="18" width="1" height="1" opacity="0.51"/><rect x="34" y="19" width="1" height="1" opacity="0.30"/><rect x="35" y="18" width="1" height="1" opacity="0.66"/><rect x="35" y="19" width="1" height="1" opacity="0.39"/><rect x="36" y="18" width="1" height="1" opacity="0.41"/><rect x="36" y="19" width="1" height="1" opacity="0.24"/></g>
<g fill="#800000"><rect x="8" y="20" width="1" height="1" opacity="0.51"/><rect x="8" y="21" width="1" height="1" opacity="0.30"/><rect x="9" y="20" width="1" height="1" opacity="0.51"/><rect x="9" y="21" width="1" height="1" opacity="0.30"/><rect x="10" y="20" width="1" height="1" opacity="0.51"/><rect x="10" y="21" width="1" height="1" opacity="0.30"/><rect x="11" y="20" width="1" height="1" opacity="0.51"/><rect x="11" y="21" width="1" height="1" opacity="0.30"/><rect x="12" y="20" width="1" height="1" opacity="0.51"/><rect x="12" y="21" width="1" height="1" opacity="0.30"/></g><g fill="#3b3b3b"><rect x="13" y="20" width="1" height="1" opacity="0.26"/><rect x="13" y="21" width="1" height="1" opacity="0.15"/></g><g fill="#0000ff"><rect x="15" y="20" width="1" height="1" opacity="0.26"/><rect x="15" y="21" width="1" height="1" opacity="0.15"/><rect x="16" y="20" width="1" height="1" opacity="0.41"/><rect x="16" y="21" width="1" height="1" opacity="0.24"/><rect x="17" y="20" width="1" height="1" opacity="0.51"/><rect x="17" y="21" width="1" height="1" opacity="0.30"/><rect x="18" y="20" width="1" height="1" opacity="0.51"/><rect x="18" y="21" width="1" height="1" opacity="0.30"/><rect x="19" y="20" width="1" height="1" opacity="0.41"/><rect x="19" y="21" width="1" height="1" opacity="0.24"/><rect x="20" y="20" width="1" height="1" opacity="0.51"/><rect x="20" y="21" width="1" height="1" opacity="0.30"/><rect x="21" y="20" width="1" height="1" opacity="0.51"/><rect x="21" y="21" width="1" height="1" opacity="0.30"/><rect x="22" y="20" width="1" height="1" opacity="0.51"/><rect x="22" y="21" width="1" height="1" opacity="0.30"/></g><g fill="#a31515"><rect x="24" y="20" width="1" height="1" opacity="0.51"/><rect x="24" y="21" width="1" height="1" opacity="0.30"/><rect x="25" y="20" width="1" height="1" opacity="0.51"/><rect x="25" y="21" width="1" height="1" opacity="0.30"/><rect x="26" y="20" width="1" height="1" opacity="0.51"/><rect x="26" y="21" width="1" height="1" opacity="0.30"/><rect x="27" y="20" width="1" height="1" opacity="0.51"/><rect x="27" y="21" width="1" height="1" opacity="0.30"/><rect x="28" y="20" width="1" height="1" opacity="0.51"/><rect x="28" y="21" width="1" height="1" opacity="0.30"/><rect x="29" y="20" width="1" height="1" opacity="0.51"/><rect x="29" y="21" width="1" height="1" opacity="0.30"/><rect x="30" y="20" width="1" height="1" opacity="0.26"/><rect x="30" y="21" width="1" height="1" opacity="0.15"/><rect x="31" y="20" width="1" height="1" opacity="0.51"/><rect x="31" y="21" width="1" height="1" opacity="0.30"/><rect x="32" y="20" width="1" height="1" opacity="0.51"/><rect x="32" y="21" width="1" height="1" opacity="0.30"/><rect x="33" y="20" width="1" height="1" opacity="0.66"/><rect x="33" y="21" width="1" height="1" opacity="0.39"/><rect x="34" y="20" width="1" height="1" opacity="0.41"/><rect x="34" y="21" width="1" height="1" opacity="0.24"/></g>
<g fill="#008000"><rect x="8" y="24" width="1" height="1" opacity="0.66"/><rect x="8" y="25" width="1" height="1" opacity="0.39"/><rect x="10" y="24" width="1" height="1" opacity="0.59"/><rect x="10" y="25" width="1" height="1" opacity="0.35"/><rect x="11" y="24" width="1" height="1" opacity="0.51"/><rect x="11" y="25" width="1" height="1" opacity="0.30"/><rect x="12" y="24" width="1" height="1" opacity="0.51"/><rect x="12" y="25" width="1" height="1" opacity="0.30"/><rect x="14" y="24" width="1" height="1" opacity="0.41"/><rect x="14" y="25" width="1" height="1" opacity="0.24"/><rect x="15" y="24" width="1" height="1" opacity="0.51"/><rect x="15" y="25" width="1" height="1" opacity="0.30"/><rect x="16" y="24" width="1" height="1" opacity="0.41"/><rect x="16" y="25" width="1" height="1" opacity="0.24"/><rect x="17" y="24" width="1" height="1" opacity="0.41"/><rect x="17" y="25" width="1" height="1" opacity="0.24"/><rect x="18" y="24" width="1" height="1" opacity="0.51"/><rect x="18" y="25" width="1" height="1" opacity="0.30"/><rect x="19" y="24" width="1" height="1" opacity="0.66"/><rect x="19" y="25" width="1" height="1" opacity="0.39"/><rect x="20" y="24" width="1" height="1" opacity="0.41"/><rect x="20" y="25" width="1" height="1" opacity="0.24"/><rect x="21" y="24" width="1" height="1" opacity="0.51"/><rect x="21" y="25" width="1" height="1" opacity="0.30"/><rect x="22" y="24" width="1" height="1" opacity="0.51"/><rect x="22" y="25" width="1" height="1" opacity="0.30"/><rect x="24" y="24" width="1" height="1" opacity="0.51"/><rect x="24" y="25" width="1" height="1" opacity="0.30"/><rect x="25" y="24" width="1" height="1" opacity="0.51"/><rect x="25" y="25" width="1" height="1" opacity="0.30"/><rect x="26" y="24" width="1" height="1" opacity="0.51"/><rect x="26" y="25" width="1" height="1" opacity="0.30"/><rect x="27" y="24" width="1" height="1" opacity="0.51"/><rect x="27" y="25" width="1" height="1" opacity="0.30"/><rect x="29" y="24" width="1" height="1" opacity="0.51"/><rect x="29" y="25" width="1" height="1" opacity="0.30"/><rect x="31" y="24" width="1" height="1" opacity="0.51"/><rect x="31" y="25" width="1" height="1" opacity="0.30"/><rect x="32" y="24" width="1" height="1" opacity="0.51"/><rect x="32" y="25" width="1" height="1" opacity="0.30"/><rect x="33" y="24" width="1" height="1" opacity="0.51"/><rect x="33" y="25" width="1" height="1" opacity="0.30"/><rect x="34" y="24" width="1" height="1" opacity="0.51"/><rect x="34" y="25" width="1" height="1" opacity="0.30"/><rect x="35" y="24" width="1" height="1" opacity="0.51"/><rect x="35" y="25" width="1" height="1" opacity="0.30"/><rect x="36" y="24" width="1" height="1" opacity="0.41"/><rect x="36" y="25" width="1" height="1" opacity="0.24"/><rect x="38" y="24" width="1" height="1" opacity="0.41"/><rect x="38" y="25" width="1" height="1" opacity="0.24"/><rect x="39" y="24" width="1" height="1" opacity="0.51"/><rect x="39" y="25" width="1" height="1" opacity="0.30"/><rect x="41" y="24" width="1" height="1" opacity="0.51"/><rect x="41" y="25" width="1" height="1" opacity="0.30"/><rect x="42" y="24" width="1" height="1" opacity="0.51"/><rect x="42" y="25" width="1" height="1" opacity="0.30"/><rect x="43" y="24" width="1" height="1" opacity="0.51"/><rect x="43" y="25" width="1" height="1" opacity="0.30"/><rect x="44" y="24" width="1" height="1" opacity="0.51"/><rect x="44" y="25" width="1" height="1" opacity="0.30"/><rect x="45" y="24" width="1" height="1" opacity="0.51"/><rect x="45" y="25" width="1" height="1" opacity="0.30"/><rect x="46" y="24" width="1" height="1" opacity="0.51"/><rect x="46" y="25" width="1" height="1" opacity="0.30"/><rect x="48" y="24" width="1" height="1" opacity="0.41"/><rect x="48" y="25" width="1" height="1" opacity="0.24"/><rect x="49" y="24" width="1" height="1" opacity="0.51"/><rect x="49" y="25" width="1" height="1" opacity="0.30"/><rect x="50" y="24" width="1" height="1" opacity="0.51"/><rect x="50" y="25" width="1" height="1" opacity="0.30"/><rect x="52" y="24" width="1" height="1" opacity="0.51"/><rect x="52" y="25" width="1" height="1" opacity="0.30"/><rect x="53" y="24" width="1" height="1" opacity="0.51"/><rect x="53" y="25" width="1" height="1" opacity="0.30"/><rect x="54" y="24" width="1" height="1" opacity="0.41"/><rect x="54" y="25" width="1" height="1" opacity="0.24"/><rect x="55" y="24" width="1" height="1" opacity="0.51"/><rect x="55" y="25" width="1" height="1" opacity="0.30"/><rect x="57" y="24" width="1" height="1" opacity="0.51"/><rect x="57" y="25" width="1" height="1" opacity="0.30"/><rect x="58" y="24" width="1" height="1" opacity="0.41"/><rect x="58" y="25" width="1" height="1" opacity="0.24"/><rect x="59" y="24" width="1" height="1" opacity="0.51"/><rect x="59" y="25" width="1" height="1" opacity="0.30"/><rect x="60" y="24" width="1" height="1" opacity="0.51"/><rect x="60" y="25" width="1" height="1" opacity="0.30"/><rect x="61" y="24" width="1" height="1" opacity="0.51"/><rect x="61" y="25" width="1" height="1" opacity="0.30"/><rect x="62" y="24" width="1" height="1" opacity="0.51"/><rect x="62" y="25" width="1" height="1" opacity="0.30"/><rect x="63" y="24" width="1" height="1" opacity="0.51"/><rect x="63" y="25" width="1" height="1" opacity="0.30"/></g>
<g fill="#800000"><rect x="8" y="26" width="1" height="1" opacity="0.66"/><rect x="8" y="27" width="1" height="1" opacity="0.39"/><rect x="9" y="26" width="1" height="1" opacity="0.51"/><rect x="9" y="27" width="1" height="1" opacity="0.30"/><rect x="10" y="26" width="1" height="1" opacity="0.41"/><rect x="10" y="27" width="1" height="1" opacity="0.24"/><rect x="11" y="26" width="1" height="1" opacity="0.41"/><rect x="11" y="27" width="1" height="1" opacity="0.24"/></g><g fill="#3b3b3b"><rect x="12" y="26" width="1" height="1" opacity="0.26"/><rect x="12" y="27" width="1" height="1" opacity="0.15"/></g>
<g fill="#800000"><rect x="10" y="28" width="1" height="1" opacity="0.51"/><rect x="10" y="29" width="1" height="1" opacity="0.30"/><rect x="11" y="28" width="1" height="1" opacity="0.51"/><rect x="11" y="29" width="1" height="1" opacity="0.30"/><rect x="12" y="28" width="1" height="1" opacity="0.51"/><rect x="12" y="29" width="1" height="1" opacity="0.30"/><rect x="13" y="28" width="1" height="1" opacity="0.51"/><rect x="13" y="29" width="1" height="1" opacity="0.30"/><rect x="14" y="28" width="1" height="1" opacity="0.51"/><rect x="14" y="29" width="1" height="1" opacity="0.30"/><rect x="15" y="28" width="1" height="1" opacity="0.41"/><rect x="15" y="29" width="1" height="1" opacity="0.24"/></g><g fill="#3b3b3b"><rect x="16" y="28" width="1" height="1" opacity="0.26"/><rect x="16" y="29" width="1" height="1" opacity="0.15"/></g>
<g fill="#3b3b3b"><rect x="12" y="30" width="1" height="1" opacity="0.26"/><rect x="12" y="31" width="1" height="1" opacity="0.15"/></g><g fill="#800000"><rect x="14" y="30" width="1" height="1" opacity="0.51"/><rect x="14" y="31" width="1" height="1" opacity="0.30"/><rect x="15" y="30" width="1" height="1" opacity="0.51"/><rect x="15" y="31" width="1" height="1" opacity="0.30"/><rect x="16" y="30" width="1" height="1" opacity="0.66"/><rect x="16" y="31" width="1" height="1" opacity="0.39"/><rect x="17" y="30" width="1" height="1" opacity="0.51"/><rect x="17" y="31" width="1" height="1" opacity="0.30"/></g><g fill="#3b3b3b"><rect x="18" y="30" width="1" height="1" opacity="0.26"/><rect x="18" y="31" width="1" height="1" opacity="0.15"/></g><g fill="#a31515"><rect x="20" y="30" width="1" height="1" opacity="0.26"/><rect x="20" y="31" width="1" height="1" opacity="0.15"/><rect x="21" y="30" width="1" height="1" opacity="0.59"/><rect x="21" y="31" width="1" height="1" opacity="0.35"/><rect x="22" y="30" width="1" height="1" opacity="0.51"/><rect x="22" y="31" width="1" height="1" opacity="0.30"/><rect x="23" y="30" width="1" height="1" opacity="0.51"/><rect x="23" y="31" width="1" height="1" opacity="0.30"/><rect x="24" y="30" width="1" height="1" opacity="0.51"/><rect x="24" y="31" width="1" height="1" opacity="0.30"/><rect x="25" y="30" width="1" height="1" opacity="0.51"/><rect x="25" y="31" width="1" height="1" opacity="0.30"/><rect x="27" y="30" width="1" height="1" opacity="0.59"/><rect x="27" y="31" width="1" height="1" opacity="0.35"/><rect x="28" y="30" width="1" height="1" opacity="0.59"/><rect x="28" y="31" width="1" height="1" opacity="0.35"/><rect x="30" y="30" width="1" height="1" opacity="0.59"/><rect x="30" y="31" width="1" height="1" opacity="0.35"/><rect x="31" y="30" width="1" height="1" opacity="0.51"/><rect x="31" y="31" width="1" height="1" opacity="0.30"/><rect x="32" y="30" width="1" height="1" opacity="0.66"/><rect x="32" y="31" width="1" height="1" opacity="0.39"/><rect x="33" y="30" width="1" height="1" opacity="0.51"/><rect x="33" y="31" width="1" height="1" opacity="0.30"/><rect x="34" y="30" width="1" height="1" opacity="0.51"/><rect x="34" y="31" width="1" height="1" opacity="0.30"/><rect x="35" y="30" width="1" height="1" opacity="0.41"/><rect x="35" y="31" width="1" height="1" opacity="0.24"/><rect x="36" y="30" width="1" height="1" opacity="0.51"/><rect x="36" y="31" width="1" height="1" opacity="0.30"/><rect x="37" y="30" width="1" height="1" opacity="0.41"/><rect x="37" y="31" width="1" height="1" opacity="0.24"/><rect x="38" y="30" width="1" height="1" opacity="0.51"/><rect x="38" y="31" width="1" height="1" opacity="0.30"/><rect x="39" y="30" width="1" height="1" opacity="0.41"/><rect x="39" y="31" width="1" height="1" opacity="0.24"/><rect x="40" y="30" width="1" height="1" opacity="0.51"/><rect x="40" y="31" width="1" height="1" opacity="0.30"/><rect x="42" y="30" width="1" height="1" opacity="0.41"/><rect x="42" y="31" width="1" height="1" opacity="0.24"/><rect x="43" y="30" width="1" height="1" opacity="0.59"/><rect x="43" y="31" width="1" height="1" opacity="0.35"/><rect x="44" y="30" width="1" height="1" opacity="0.41"/><rect x="44" y="31" width="1" height="1" opacity="0.24"/><rect x="45" y="30" width="1" height="1" opacity="0.26"/><rect x="45" y="31" width="1" height="1" opacity="0.15"/></g>
<g fill="#800000"><rect x="14" y="32" width="1" height="1" opacity="0.51"/><rect x="14" y="33" width="1" height="1" opacity="0.30"/><rect x="15" y="32" width="1" height="1" opacity="0.41"/><rect x="15" y="33" width="1" height="1" opacity="0.24"/><rect x="16" y="32" width="1" height="1" opacity="0.51"/><rect x="16" y="33" width="1" height="1" opacity="0.30"/><rect x="17" y="32" width="1" height="1" opacity="0.41"/><rect x="17" y="33" width="1" height="1" opacity="0.24"/><rect x="18" y="32" width="1" height="1" opacity="0.51"/><rect x="18" y="33" width="1" height="1" opacity="0.30"/><rect x="19" y="32" width="1" height="1" opacity="0.26"/><rect x="19" y="33" width="1" height="1" opacity="0.15"/><rect x="20" y="32" width="1" height="1" opacity="0.41"/><rect x="20" y="33" width="1" height="1" opacity="0.24"/><rect x="21" y="32" width="1" height="1" opacity="0.51"/><rect x="21" y="33" width="1" height="1" opacity="0.30"/><rect x="22" y="32" width="1" height="1" opacity="0.51"/><rect x="22" y="33" width="1" height="1" opacity="0.30"/><rect x="23" y="32" width="1" height="1" opacity="0.41"/><rect x="23" y="33" width="1" height="1" opacity="0.24"/><rect x="24" y="32" width="1" height="1" opacity="0.51"/><rect x="24" y="33" width="1" height="1" opacity="0.30"/></g><g fill="#3b3b3b"><rect x="25" y="32" width="1" height="1" opacity="0.26"/><rect x="25" y="33" width="1" height="1" opacity="0.15"/></g><g fill="#a31515"><rect x="27" y="32" width="1" height="1" opacity="0.26"/><rect x="27" y="33" width="1" height="1" opacity="0.15"/><rect x="28" y="32" width="1" height="1" opacity="0.41"/><rect x="28" y="33" width="1" height="1" opacity="0.24"/><rect x="29" y="32" width="1" height="1" opacity="0.41"/><rect x="29" y="33" width="1" height="1" opacity="0.24"/><rect x="30" y="32" width="1" height="1" opacity="0.41"/><rect x="30" y="33" width="1" height="1" opacity="0.24"/><rect x="31" y="32" width="1" height="1" opacity="0.26"/><rect x="31" y="33" width="1" height="1" opacity="0.15"/><rect x="32" y="32" width="1" height="1" opacity="0.59"/><rect x="32" y="33" width="1" height="1" opacity="0.35"/><rect x="33" y="32" width="1" height="1" opacity="0.59"/><rect x="33" y="33" width="1" height="1" opacity="0.35"/><rect x="34" y="32" width="1" height="1" opacity="0.59"/><rect x="34" y="33" width="1" height="1" opacity="0.35"/><rect x="35" y="32" width="1" height="1" opacity="0.41"/><rect x="35" y="33" width="1" height="1" opacity="0.24"/><rect x="36" y="32" width="1" height="1" opacity="0.59"/><rect x="36" y="33" width="1" height="1" opacity="0.35"/><rect x="37" y="32" width="1" height="1" opacity="0.59"/><rect x="37" y="33" width="1" height="1" opacity="0.35"/><rect x="38" y="32" width="1" height="1" opacity="0.59"/><rect x="38" y="33" width="1" height="1" opacity="0.35"/><rect x="39" y="32" width="1" height="1" opacity="0.41"/><rect x="39" y="33" width="1" height="1" opacity="0.24"/><rect x="40" y="32" width="1" height="1" opacity="0.51"/><rect x="40" y="33" width="1" height="1" opacity="0.30"/><rect x="41" y="32" width="1" height="1" opacity="0.51"/><rect x="41" y="33" width="1" height="1" opacity="0.30"/><rect x="42" y="32" width="1" height="1" opacity="0.51"/><rect x="42" y="33" width="1" height="1" opacity="0.30"/><rect x="43" y="32" width="1" height="1" opacity="0.41"/><rect x="43" y="33" width="1" height="1" opacity="0.24"/><rect x="44" y="32" width="1" height="1" opacity="0.51"/><rect x="44" y="33" width="1" height="1" opacity="0.30"/><rect x="45" y="32" width="1" height="1" opacity="0.51"/><rect x="45" y="33" width="1" height="1" opacity="0.30"/><rect x="46" y="32" width="1" height="1" opacity="0.51"/><rect x="46" y="33" width="1" height="1" opacity="0.30"/><rect x="47" y="32" width="1" height="1" opacity="0.41"/><rect x="47" y="33" width="1" height="1" opacity="0.24"/><rect x="48" y="32" width="1" height="1" opacity="0.59"/><rect x="48" y="33" width="1" height="1" opacity="0.35"/><rect x="49" y="32" width="1" height="1" opacity="0.51"/><rect x="49" y="33" width="1" height="1" opacity="0.30"/><rect x="50" y="32" width="1" height="1" opacity="0.51"/><rect x="50" y="33" width="1" height="1" opacity="0.30"/><rect x="51" y="32" width="1" height="1" opacity="0.51"/><rect x="51" y="33" width="1" height="1" opacity="0.30"/><rect x="52" y="32" width="1" height="1" opacity="0.51"/><rect x="52" y="33" width="1" height="1" opacity="0.30"/><rect x="53" y="32" width="1" height="1" opacity="0.26"/><rect x="53" y="33" width="1" height="1" opacity="0.15"/><rect x="54" y="32" width="1" height="1" opacity="0.59"/><rect x="54" y="33" width="1" height="1" opacity="0.35"/><rect x="55" y="32" width="1" height="1" opacity="0.59"/><rect x="55" y="33" width="1" height="1" opacity="0.35"/><rect x="56" y="32" width="1" height="1" opacity="0.26"/><rect x="56" y="33" width="1" height="1" opacity="0.15"/><rect x="57" y="32" width="1" height="1" opacity="0.41"/><rect x="57" y="33" width="1" height="1" opacity="0.24"/><rect x="58" y="32" width="1" height="1" opacity="0.41"/><rect x="58" y="33" width="1" height="1" opacity="0.24"/><rect x="59" y="32" width="1" height="1" opacity="0.59"/><rect x="59" y="33" width="1" height="1" opacity="0.35"/><rect x="60" y="32" width="1" height="1" opacity="0.59"/><rect x="60" y="33" width="1" height="1" opacity="0.35"/><rect x="61" y="32" width="1" height="1" opacity="0.41"/><rect x="61" y="33" width="1" height="1" opacity="0.24"/><rect x="62" y="32" width="1" height="1" opacity="0.41"/><rect x="62" y="33" width="1" height="1" opacity="0.24"/><rect x="63" y="32" width="1" height="1" opacity="0.41"/><rect x="63" y="33" width="1" height="1" opacity="0.24"/></g>
<g fill="#800000"><rect x="14" y="34" width="1" height="1" opacity="0.51"/><rect x="14" y="35" width="1" height="1" opacity="0.30"/><rect x="15" y="34" width="1" height="1" opacity="0.51"/><rect x="15" y="35" width="1" height="1" opacity="0.30"/><rect x="16" y="34" width="1" height="1" opacity="0.41"/><rect x="16" y="35" width="1" height="1" opacity="0.24"/><rect x="17" y="34" width="1" height="1" opacity="0.51"/><rect x="17" y="35" width="1" height="1" opacity="0.30"/><rect x="18" y="34" width="1" height="1" opacity="0.51"/><rect x="18" y="35" width="1" height="1" opacity="0.30"/><rect x="19" y="34" width="1" height="1" opacity="0.26"/><rect x="19" y="35" width="1" height="1" opacity="0.15"/><rect x="20" y="34" width="1" height="1" opacity="0.41"/><rect x="20" y="35" width="1" height="1" opacity="0.24"/><rect x="21" y="34" width="1" height="1" opacity="0.51"/><rect x="21" y="35" width="1" height="1" opacity="0.30"/><rect x="22" y="34" width="1" height="1" opacity="0.66"/><rect x="22" y="35" width="1" height="1" opacity="0.39"/><rect x="23" y="34" width="1" height="1" opacity="0.51"/><rect x="23" y="35" width="1" height="1" opacity="0.30"/><rect x="24" y="34" width="1" height="1" opacity="0.41"/><rect x="24" y="35" width="1" height="1" opacity="0.24"/><rect x="25" y="34" width="1" height="1" opacity="0.51"/><rect x="25" y="35" width="1" height="1" opacity="0.30"/><rect x="26" y="34" width="1" height="1" opacity="0.41"/><rect x="26" y="35" width="1" height="1" opacity="0.24"/><rect x="27" y="34" width="1" height="1" opacity="0.51"/><rect x="27" y="35" width="1" height="1" opacity="0.30"/></g><g fill="#3b3b3b"><rect x="28" y="34" width="1" height="1" opacity="0.26"/><rect x="28" y="35" width="1" height="1" opacity="0.15"/></g><g fill="#a31515"><rect x="30" y="34" width="1" height="1" opacity="0.26"/><rect x="30" y="35" width="1" height="1" opacity="0.15"/></g><g fill="#e51400"><rect x="31" y="34" width="1" height="1" opacity="0.41"/><rect x="31" y="35" width="1" height="1" opacity="0.24"/><rect x="32" y="34" width="1" height="1" opacity="0.41"/><rect x="32" y="35" width="1" height="1" opacity="0.24"/></g><g fill="#000000"><rect x="34" y="34" width="1" height="1" opacity="0.51"/><rect x="34" y="35" width="1" height="1" opacity="0.30"/><rect x="35" y="34" width="1" height="1" opacity="0.51"/><rect x="35" y="35" width="1" height="1" opacity="0.30"/><rect x="36" y="34" width="1" height="1" opacity="0.41"/><rect x="36" y="35" width="1" height="1" opacity="0.24"/><rect x="37" y="34" width="1" height="1" opacity="0.51"/><rect x="37" y="35" width="1" height="1" opacity="0.30"/><rect x="38" y="34" width="1" height="1" opacity="0.51"/><rect x="38" y="35" width="1" height="1" opacity="0.30"/><rect x="40" y="34" width="1" height="1" opacity="0.26"/><rect x="40" y="35" width="1" height="1" opacity="0.15"/><rect x="42" y="34" width="1" height="1" opacity="0.41"/><rect x="42" y="35" width="1" height="1" opacity="0.24"/><rect x="43" y="34" width="1" height="1" opacity="0.41"/><rect x="43" y="35" width="1" height="1" opacity="0.24"/><rect x="44" y="34" width="1" height="1" opacity="0.51"/><rect x="44" y="35" width="1" height="1" opacity="0.30"/><rect x="45" y="34" width="1" height="1" opacity="0.51"/><rect x="45" y="35" width="1" height="1" opacity="0.30"/><rect x="46" y="34" width="1" height="1" opacity="0.41"/><rect x="46" y="35" width="1" height="1" opacity="0.24"/></g><g fill="#e51400"><rect x="48" y="34" width="1" height="1" opacity="0.41"/><rect x="48" y="35" width="1" height="1" opacity="0.24"/><rect x="49" y="34" width="1" height="1" opacity="0.41"/><rect x="49" y="35" width="1" height="1" opacity="0.24"/></g><g fill="#a31515"><rect x="50" y="34" width="1" height="1" opacity="0.26"/><rect x="50" y="35" width="1" height="1" opacity="0.15"/></g>
<g fill="#800000"><rect x="14" y="36" width="1" height="1" opacity="0.51"/><rect x="14" y="37" width="1" height="1" opacity="0.30"/><rect x="15" y="36" width="1" height="1" opacity="0.51"/><rect x="15" y="37" width="1" height="1" opacity="0.30"/><rect x="16" y="36" width="1" height="1" opacity="0.41"/><rect x="16" y="37" width="1" height="1" opacity="0.24"/><rect x="17" y="36" width="1" height="1" opacity="0.41"/><rect x="17" y="37" width="1" height="1" opacity="0.24"/><rect x="18" y="36" width="1" height="1" opacity="0.26"/><rect x="18" y="37" width="1" height="1" opacity="0.15"/><rect x="19" y="36" width="1" height="1" opacity="0.51"/><rect x="19" y="37" width="1" height="1" opacity="0.30"/><rect x="20" y="36" width="1" height="1" opacity="0.41"/><rect x="20" y="37" width="1" height="1" opacity="0.24"/><rect x="21" y="36" width="1" height="1" opacity="0.26"/><rect x="21" y="37" width="1" height="1" opacity="0.15"/><rect x="22" y="36" width="1" height="1" opacity="0.66"/><rect x="22" y="37" width="1" height="1" opacity="0.39"/><rect x="23" y="36" width="1" height="1" opacity="0.51"/><rect x="23" y="37" width="1" height="1" opacity="0.30"/><rect x="24" y="36" width="1" height="1" opacity="0.51"/><rect x="24" y="37" width="1" height="1" opacity="0.30"/><rect x="25" y="36" width="1" height="1" opacity="0.51"/><rect x="25" y="37" width="1" height="1" opacity="0.30"/><rect x="26" y="36" width="1" height="1" opacity="0.51"/><rect x="26" y="37" width="1" height="1" opacity="0.30"/><rect x="27" y="36" width="1" height="1" opacity="0.41"/><rect x="27" y="37" width="1" height="1" opacity="0.24"/><rect x="28" y="36" width="1" height="1" opacity="0.51"/><rect x="28" y="37" width="1" height="1" opacity="0.30"/><rect x="29" y="36" width="1" height="1" opacity="0.66"/><rect x="29" y="37" width="1" height="1" opacity="0.39"/><rect x="30" y="36" width="1" height="1" opacity="0.51"/><rect x="30" y="37" width="1" height="1" opacity="0.30"/><rect x="31" y="36" width="1" height="1" opacity="0.51"/><rect x="31" y="37" width="1" height="1" opacity="0.30"/><rect x="32" y="36" width="1" height="1" opacity="0.41"/><rect x="32" y="37" width="1" height="1" opacity="0.24"/></g><g fill="#3b3b3b"><rect x="33" y="36" width="1" height="1" opacity="0.26"/><rect x="33" y="37" width="1" height="1" opacity="0.15"/></g><g fill="#a31515"><rect x="35" y="36" width="1" height="1" opacity="0.26"/><rect x="35" y="37" width="1" height="1" opacity="0.15"/><rect x="36" y="36" width="1" height="1" opacity="0.26"/><rect x="36" y="37" width="1" height="1" opacity="0.15"/><rect x="37" y="36" width="1" height="1" opacity="0.59"/><rect x="37" y="37" width="1" height="1" opacity="0.35"/><rect x="38" y="36" width="1" height="1" opacity="0.26"/><rect x="38" y="37" width="1" height="1" opacity="0.15"/></g>
<g fill="#800000"><rect x="14" y="38" width="1" height="1" opacity="0.51"/><rect x="14" y="39" width="1" height="1" opacity="0.30"/><rect x="15" y="38" width="1" height="1" opacity="0.51"/><rect x="15" y="39" width="1" height="1" opacity="0.30"/><rect x="16" y="38" width="1" height="1" opacity="0.51"/><rect x="16" y="39" width="1" height="1" opacity="0.30"/><rect x="17" y="38" width="1" height="1" opacity="0.41"/><rect x="17" y="39" width="1" height="1" opacity="0.24"/><rect x="18" y="38" width="1" height="1" opacity="0.51"/><rect x="18" y="39" width="1" height="1" opacity="0.30"/><rect x="19" y="38" width="1" height="1" opacity="0.51"/><rect x="19" y="39" width="1" height="1" opacity="0.30"/><rect x="20" y="38" width="1" height="1" opacity="0.26"/><rect x="20" y="39" width="1" height="1" opacity="0.15"/><rect x="21" y="38" width="1" height="1" opacity="0.51"/><rect x="21" y="39" width="1" height="1" opacity="0.30"/><rect x="22" y="38" width="1" height="1" opacity="0.41"/><rect x="22" y="39" width="1" height="1" opacity="0.24"/><rect x="23" y="38" width="1" height="1" opacity="0.51"/><rect x="23" y="39" width="1" height="1" opacity="0.30"/><rect x="24" y="38" width="1" height="1" opacity="0.51"/><rect x="24" y="39" width="1" height="1" opacity="0.30"/><rect x="25" y="38" width="1" height="1" opacity="0.51"/><rect x="25" y="39" width="1" height="1" opacity="0.30"/></g><g fill="#3b3b3b"><rect x="26" y="38" width="1" height="1" opacity="0.26"/><rect x="26" y="39" width="1" height="1" opacity="0.15"/></g><g fill="#a31515"><rect x="28" y="38" width="1" height="1" opacity="0.41"/><rect x="28" y="39" width="1" height="1" opacity="0.24"/><rect x="29" y="38" width="1" height="1" opacity="0.51"/><rect x="29" y="39" width="1" height="1" opacity="0.30"/><rect x="30" y="38" width="1" height="1" opacity="0.66"/><rect x="30" y="39" width="1" height="1" opacity="0.39"/><rect x="31" y="38" width="1" height="1" opacity="0.51"/><rect x="31" y="39" width="1" height="1" opacity="0.30"/><rect x="32" y="38" width="1" height="1" opacity="0.51"/><rect x="32" y="39" width="1" height="1" opacity="0.30"/><rect x="33" y="38" width="1" height="1" opacity="0.41"/><rect x="33" y="39" width="1" height="1" opacity="0.24"/><rect x="34" y="38" width="1" height="1" opacity="0.51"/><rect x="34" y="39" width="1" height="1" opacity="0.30"/><rect x="35" y="38" width="1" height="1" opacity="0.41"/><rect x="35" y="39" width="1" height="1" opacity="0.24"/><rect x="36" y="38" width="1" height="1" opacity="0.51"/><rect x="36" y="39" width="1" height="1" opacity="0.30"/><rect x="37" y="38" width="1" height="1" opacity="0.41"/><rect x="37" y="39" width="1" height="1" opacity="0.24"/><rect x="38" y="38" width="1" height="1" opacity="0.51"/><rect x="38" y="39" width="1" height="1" opacity="0.30"/></g>
<g fill="#800000"><rect x="14" y="40" width="1" height="1" opacity="0.51"/><rect x="14" y="41" width="1" height="1" opacity="0.30"/><rect x="15" y="40" width="1" height="1" opacity="0.41"/><rect x="15" y="41" width="1" height="1" opacity="0.24"/><rect x="16" y="40" width="1" height="1" opacity="0.51"/><rect x="16" y="41" width="1" height="1" opacity="0.30"/><rect x="17" y="40" width="1" height="1" opacity="0.41"/><rect x="17" y="41" width="1" height="1" opacity="0.24"/><rect x="18" y="40" width="1" height="1" opacity="0.51"/><rect x="18" y="41" width="1" height="1" opacity="0.30"/><rect x="19" y="40" width="1" height="1" opacity="0.26"/><rect x="19" y="41" width="1" height="1" opacity="0.15"/><rect x="20" y="40" width="1" height="1" opacity="0.51"/><rect x="20" y="41" width="1" height="1" opacity="0.30"/><rect x="21" y="40" width="1" height="1" opacity="0.41"/><rect x="21" y="41" width="1" height="1" opacity="0.24"/><rect x="22" y="40" width="1" height="1" opacity="0.51"/><rect x="22" y="41" width="1" height="1" opacity="0.30"/><rect x="23" y="40" width="1" height="1" opacity="0.51"/><rect x="23" y="41" width="1" height="1" opacity="0.30"/><rect x="24" y="40" width="1" height="1" opacity="0.51"/><rect x="24" y="41" width="1" height="1" opacity="0.30"/></g><g fill="#3b3b3b"><rect x="25" y="40" width="1" height="1" opacity="0.26"/><rect x="25" y="41" width="1" height="1" opacity="0.15"/></g><g fill="#a31515"><rect x="27" y="40" width="1" height="1" opacity="0.66"/><rect x="27" y="41" width="1" height="1" opacity="0.39"/><rect x="28" y="40" width="1" height="1" opacity="0.51"/><rect x="28" y="41" width="1" height="1" opacity="0.30"/><rect x="29" y="40" width="1" height="1" opacity="0.51"/><rect x="29" y="41" width="1" height="1" opacity="0.30"/><rect x="30" y="40" width="1" height="1" opacity="0.51"/><rect x="30" y="41" width="1" height="1" opacity="0.30"/><rect x="31" y="40" width="1" height="1" opacity="0.51"/><rect x="31" y="41" width="1" height="1" opacity="0.30"/><rect x="32" y="40" width="1" height="1" opacity="0.41"/><rect x="32" y="41" width="1" height="1" opacity="0.24"/><rect x="33" y="40" width="1" height="1" opacity="0.51"/><rect x="33" y="41" width="1" height="1" opacity="0.30"/><rect x="34" y="40" width="1" height="1" opacity="0.66"/><rect x="34" y="41" width="1" height="1" opacity="0.39"/><rect x="35" y="40" width="1" height="1" opacity="0.51"/><rect x="35" y="41" width="1" height="1" opacity="0.30"/><rect x="36" y="40" width="1" height="1" opacity="0.51"/><rect x="36" y="41" width="1" height="1" opacity="0.30"/><rect x="37" y="40" width="1" height="1" opacity="0.41"/><rect x="37" y="41" width="1" height="1" opacity="0.24"/></g>
</svg>
</div>
<div id="ruler" class="abs"><div id="rmark" class="abs"></div></div>
</body>
</html>
